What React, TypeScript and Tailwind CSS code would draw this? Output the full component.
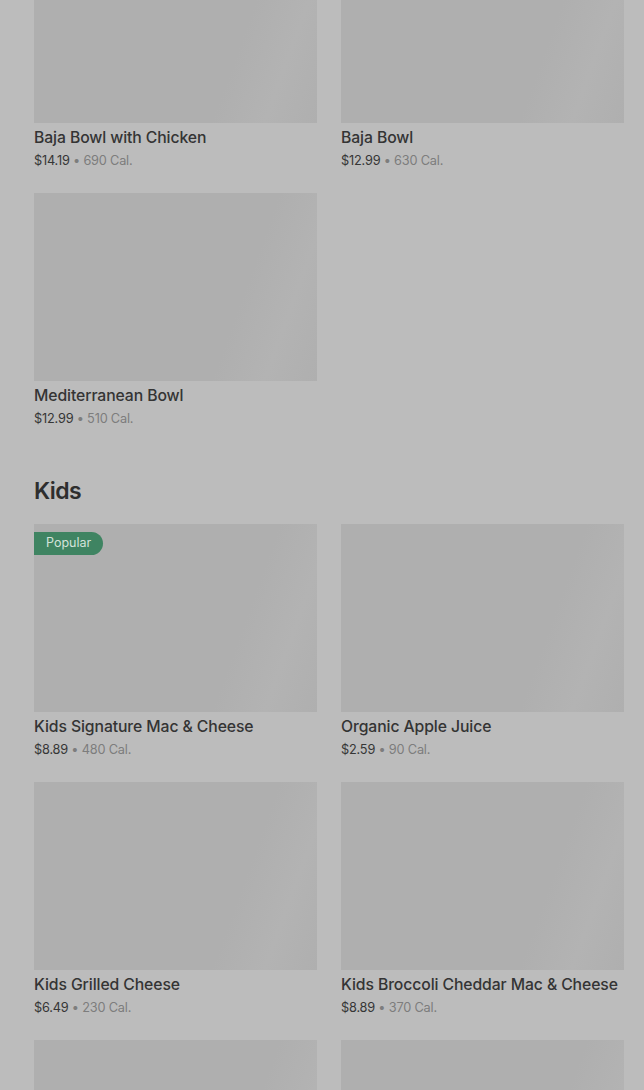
const font = { fontFamily: 'Inter, "Liberation Sans", sans-serif' }

type Item = { name: string; price: string; cal: string; popular?: boolean }

const bowls: Item[] = [
  { name: 'Baja Bowl with Chicken', price: '$14.19', cal: '690 Cal.' },
  { name: 'Baja Bowl', price: '$12.99', cal: '630 Cal.' },
  { name: 'Mediterranean Bowl', price: '$12.99', cal: '510 Cal.' },
]

const kids: Item[] = [
  { name: 'Kids Signature Mac & Cheese', price: '$8.89', cal: '480 Cal.', popular: true },
  { name: 'Organic Apple Juice', price: '$2.59', cal: '90 Cal.' },
  { name: 'Kids Grilled Cheese', price: '$6.49', cal: '230 Cal.' },
  { name: 'Kids Broccoli Cheddar Mac & Cheese', price: '$8.89', cal: '370 Cal.' },
  { name: '', price: '', cal: '' },
  { name: '', price: '', cal: '' },
]

function Card({ item }: { item: Item }) {
  return (
    <div className="flex flex-col">
      <div className="relative h-[188px] bg-[linear-gradient(110deg,#afafaf_0%,#afafaf_70%,#b3b3b3_85%,#afafaf_100%)]">
        {item.popular && (
          <span className="absolute left-0 top-2 h-[23px] px-3 flex items-center rounded-r-full bg-[#3f8462] text-[12.5px] text-[#d3e3da]">
            Popular
          </span>
        )}
      </div>
      {item.name && (
        <>
          <p className="mt-[4px] h-[22px] leading-[22px] text-[15.75px] font-medium text-[#343434] whitespace-nowrap tracking-[-0.1px]">{item.name}</p>
          <p className="mt-[2px] h-[20px] leading-[20px] text-[12.75px] whitespace-nowrap tracking-[-0.2px]">
            <span className="text-[#363636]">{item.price}</span>
            <span className="text-[#7d7d7d]"> • {item.cal}</span>
          </p>
        </>
      )}
    </div>
  )
}

export default function App() {
  return (
    <div style={font} className="w-[644px] h-[1090px] overflow-hidden bg-[#bcbcbc]">
      <div className="pl-[34px] pr-[20px] mt-[-65px]">
        <div className="grid grid-cols-2 gap-x-6 gap-y-[22px]">
          {bowls.map((b) => <Card key={b.name} item={b} />)}
        </div>
        <h2 className="mt-[46px] mb-[17px] h-8 leading-8 text-[23px] font-semibold text-[#2e2e2e] tracking-[-0.6px]">Kids</h2>
        <div className="grid grid-cols-2 gap-x-6 gap-y-[22px]">
          {kids.map((k, i) => <Card key={i} item={k} />)}
        </div>
      </div>
    </div>
  )
}
